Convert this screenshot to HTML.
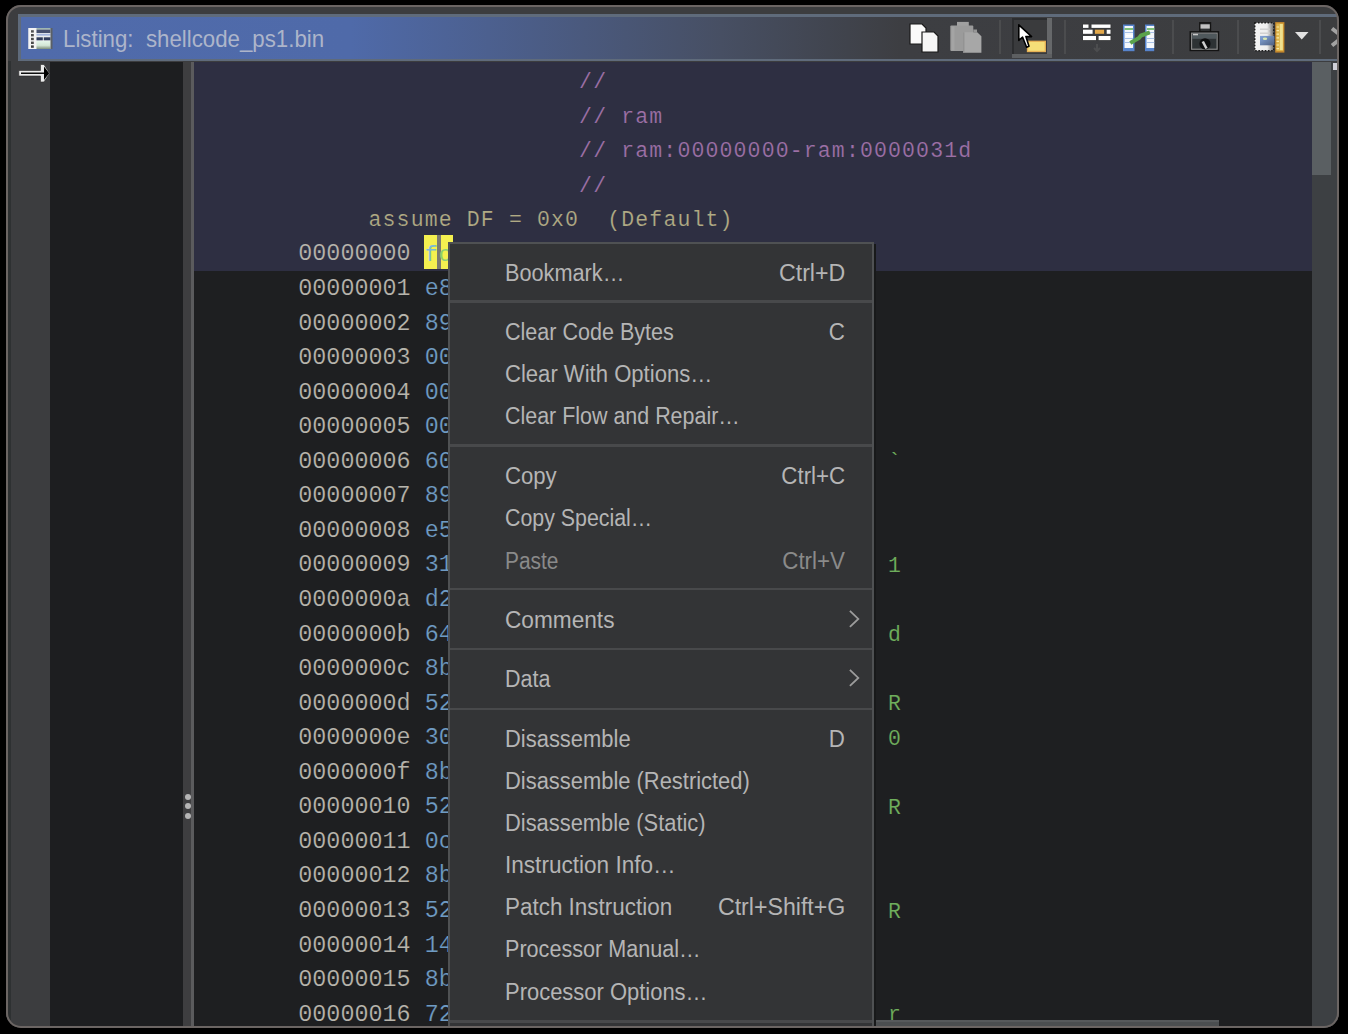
<!DOCTYPE html>
<html><head><meta charset="utf-8">
<style>
html,body{margin:0;padding:0;background:#000;width:1348px;height:1034px;overflow:hidden;position:relative}
#clip{position:absolute;left:6px;top:5px;width:1333px;height:1023px;border-radius:15px;background:#3c3d3f;overflow:hidden}
#inner{position:absolute;left:-6px;top:-5px;width:1348px;height:1034px}
#winborder{position:absolute;left:6px;top:5px;width:1333px;height:1023px;box-sizing:border-box;border:2px solid #6b6563;border-radius:15px}
#edgeL{position:absolute;left:8px;top:61px;width:3px;height:966px;background:#2e3132}
#title{position:absolute;left:18px;top:14px;width:1320px;height:47px;background:#5f6b7b}
#titlein{position:absolute;left:21px;top:17px;width:1317px;height:41.5px;background:linear-gradient(90deg,#506bab 0px,#4f6aa9 330px,#474f63 700px,#3d3e42 880px,#3c3d3f 100%)}
#titletxt{position:absolute;left:63px;top:24.6px;font-family:"Liberation Sans",sans-serif;font-size:23.2px;line-height:28px;color:#adb5ca;white-space:pre;display:inline-block;transform:scaleX(0.96);transform-origin:0 0}
#dark1{position:absolute;left:50px;top:61.5px;width:133px;height:966px;background:#1d1e20}
#div1{position:absolute;left:183px;top:61.5px;width:8.3px;height:966px;background:#3e3e40}
#div2{position:absolute;left:191.3px;top:61.5px;width:2.7px;height:966px;background:#5b5b5d}
#listing{position:absolute;left:194px;top:61.5px;width:1118px;height:966px;background:#1e1f21;overflow:hidden}
#navy{position:absolute;left:194px;top:61.5px;width:1118px;height:209.6px;background:#2e2f42}
#vscroll{position:absolute;left:1312px;top:61.5px;width:26px;height:966px;background:#3d4043}
#vthumb{position:absolute;left:1312px;top:62px;width:19px;height:113px;background:#5a5f62}
#vsq{position:absolute;left:1333px;top:63px;width:4px;height:7px;background:#d0d0d8}
#hthumb{position:absolute;left:448px;top:1020.3px;width:771px;height:6px;background:#4b4e50}
#hthumbtop{position:absolute;left:864px;top:1020.3px;width:355px;height:2px;background:#56595b}
.dot{position:absolute;width:6px;height:6px;border-radius:50%;background:#b5b5b5;left:185.4px}
.ln{position:absolute;font-family:"Liberation Mono",monospace;font-size:23.4px;line-height:34px;height:34px;white-space:pre;color:#b9b6ae}
.ln.sm{font-size:21.5px;letter-spacing:1.14px}
.ln{-webkit-text-stroke:0.2px #1e1f21}
.ln.nv{-webkit-text-stroke:0.2px #2e2f42}
.ln.nv2{-webkit-text-stroke:0}
.ln.sm.nv{-webkit-text-stroke:0.15px #2e2f42}
.ln.sm.gr{-webkit-text-stroke:0.15px #1e1f21}
.cm{color:#9d70a6}
.as{color:#b0aa84}
.ad{color:#b8b5ad}
.hx{color:#6f9bc4}
.gr{color:#6fae5c}
#cur1{position:absolute;left:424.2px;top:234.5px;width:13px;height:34.2px;background:#f4f050}
#cur2{position:absolute;left:437.2px;top:234.5px;width:3.6px;height:34.2px;background:#7a7a70}
#cur3{position:absolute;left:440.8px;top:234.5px;width:12px;height:34.2px;background:#f4f050}
#menu{position:absolute;left:447.5px;top:242px;width:426.5px;height:800px;background:#333436;box-sizing:border-box;border:2.6px solid #4f5153}
.mi{position:absolute;left:0;width:100%;height:30px;font-family:"Liberation Sans",sans-serif;font-size:23.5px;line-height:30px;color:#b5b5b5;white-space:pre}
.mi .lab{position:absolute;left:55px;top:0;display:inline-block;transform:scaleX(0.915);transform-origin:0 50%}
.mi .acc{position:absolute;right:27px;top:0;display:inline-block;transform:scaleX(0.95);transform-origin:100% 50%}
.mi.dis{color:#8a8a8a}
.mi .arr{position:absolute}
.sep{position:absolute;left:0;width:100%;height:2.6px;background:#48494b}
.tsep{position:absolute;top:20px;width:1.5px;height:34px;background:#4b4c4e}
svg{position:absolute;overflow:visible}
</style></head><body>
<div id="clip"><div id="inner">
<div id="edgeL"></div>
<div id="title"></div>
<div id="titlein"></div>
<div id="titletxt">Listing:  shellcode_ps1.bin</div>
<!-- title icon -->
<svg style="left:28px;top:27.8px" width="25" height="22" viewBox="0 0 25 22">
 <defs><linearGradient id="tg" x1="0" x2="0" y1="0" y2="1"><stop offset="0" stop-color="#e4f6ea"/><stop offset="0.55" stop-color="#d3e6d6"/><stop offset="1" stop-color="#7f8f7c"/></linearGradient></defs>
 <rect x="0.5" y="0" width="23.5" height="21" fill="#e9ecec"/>
 <rect x="0.5" y="0" width="8" height="21" fill="#f3f3f3"/>
 <rect x="3" y="2.2" width="2.8" height="2.4" fill="#505050"/>
 <rect x="3" y="6" width="2.8" height="2.4" fill="#4a4a4a"/>
 <rect x="3" y="9.8" width="2.8" height="2.4" fill="#4a4a4a"/>
 <rect x="3" y="13.6" width="2.8" height="2.4" fill="#4a4a4a"/>
 <rect x="3" y="17.4" width="2.8" height="2.4" fill="#3e3e3e"/>
 <rect x="8.5" y="0" width="15" height="1.6" fill="#9fb6b0"/>
 <rect x="8.5" y="1.6" width="14" height="3.4" fill="#46506e"/>
 <rect x="8.5" y="5.8" width="14" height="1.8" fill="#a3b4dc"/>
 <rect x="8.5" y="9.3" width="6.3" height="3" fill="#2f3b5a"/>
 <rect x="15.8" y="9.3" width="6.7" height="3" fill="#2f3b5a"/>
 <rect x="8.5" y="13" width="14" height="8" fill="url(#tg)"/>
 <rect x="22.5" y="0" width="2" height="21" fill="#5b6066"/>
</svg>
<!-- toolbar -->
<svg style="left:909px;top:23px" width="30" height="30" viewBox="0 0 30 30">
 <path d="M1 1 H13 L17 5 V21 H1 Z" fill="#fafafa" stroke="#1a1a1a" stroke-width="1.2"/>
 <path d="M13 9 H25 L29 13 V29 H13 Z" fill="#f6f6f6" stroke="#1a1a1a" stroke-width="1.2"/>
</svg>
<svg style="left:950px;top:21px" width="33" height="33" viewBox="0 0 33 33">
 <rect x="7" y="0.9" width="11.8" height="5" fill="#a0a0a0"/>
 <rect x="0.3" y="4.4" width="23" height="25.6" rx="1" fill="#9b9b9b"/>
 <rect x="1.5" y="5.5" width="3" height="24" fill="#a4a4a4"/>
 <path d="M23.3 8.6 H27 V11.3 H23.3 Z" fill="#969696"/>
 <path d="M13.2 11.3 H27.2 L31.4 15.3 V31.8 H13.2 Z" fill="#a7a7a7"/>
 <rect x="13.2" y="11.3" width="1.2" height="20.5" fill="#8f8f8f"/>
</svg>
<div class="tsep" style="left:999px"></div>
<div style="position:absolute;left:1012px;top:18px;width:40px;height:40px;background:#3a3b3d;box-shadow:inset 2px 2px 0 #2c2d2f"></div>
<div style="position:absolute;left:1047px;top:18px;width:5px;height:40px;background:#66686a"></div>
<div style="position:absolute;left:1012px;top:54px;width:40px;height:4px;background:#5d5f61"></div>
<svg style="left:1017px;top:24px" width="30" height="30" viewBox="0 0 30 30">
 <rect x="10.5" y="17.3" width="17.8" height="10.2" fill="#f5df78" stroke="#e8b255" stroke-width="1.3"/>
 <path d="M1.8 0.9 V16.4 L5.6 13.2 L9.6 23.2 L12 22.3 L8.9 12.6 H14.6 Z" fill="#ffffff" stroke="#000" stroke-width="1.6" stroke-linejoin="round"/>
</svg>
<div class="tsep" style="left:1064px"></div>
<svg style="left:1083px;top:24px" width="28" height="30" viewBox="0 0 28 30">
 <rect x="-1" y="-1" width="30" height="18" fill="#3a3b3d"/>
 <rect x="0" y="0.5" width="5.5" height="3.4" fill="#fff"/>
 <rect x="8.5" y="0.5" width="19" height="3.4" fill="#fff"/>
 <rect x="0" y="5.7" width="9.6" height="4.1" fill="#fff"/>
 <rect x="11.9" y="5.7" width="9.2" height="4.1" fill="#e3a84a"/>
 <rect x="23.7" y="5.7" width="3.8" height="4.1" fill="#fff"/>
 <rect x="0" y="12" width="13" height="4.1" fill="#fff"/>
 <rect x="15.6" y="12" width="11.9" height="4.1" fill="#fff"/>
 <path d="M14 20 V27 M11 24 L14 27 L17 24" stroke="#4c4d4f" stroke-width="2" fill="none"/>
</svg>
<svg style="left:1123px;top:24px" width="32" height="28" viewBox="0 0 32 28">
 <rect x="0" y="0.5" width="11.5" height="26.7" fill="#5784cc"/>
 <rect x="1.5" y="2" width="8.5" height="22" fill="#f4f7fb"/>
 <rect x="1.5" y="4" width="8.5" height="2" fill="#7fc07a"/>
 <rect x="1.5" y="8" width="8.5" height="1" fill="#a7c0e6"/>
 <rect x="3" y="11" width="7" height="1.5" fill="#ffffff"/>
 <rect x="1.5" y="14" width="8.5" height="1" fill="#a7c0e6"/>
 <rect x="1.5" y="18" width="8.5" height="1" fill="#a7c0e6"/>
 <rect x="22" y="0.5" width="9.2" height="26.7" fill="#5784cc"/>
 <rect x="23.5" y="2" width="7.7" height="22" fill="#f4f7fb"/>
 <rect x="24" y="4" width="7.2" height="2" fill="#7fc07a"/>
 <rect x="23.5" y="8" width="7.7" height="1" fill="#a7c0e6"/>
 <rect x="23.5" y="14" width="7.7" height="1" fill="#a7c0e6"/>
 <rect x="23.5" y="18" width="7.7" height="1" fill="#a7c0e6"/>
 <path d="M9 18 L16 14 L18 11.5 L25 9" stroke="#5aa24c" stroke-width="4" fill="none" stroke-linecap="square"/>
</svg>
<div class="tsep" style="left:1172px"></div>
<svg style="left:1189px;top:22px" width="31" height="30" viewBox="0 0 31 30">
 <rect x="10.8" y="0.8" width="10.7" height="10" fill="#2e3133" stroke="#141414" stroke-width="1.4"/>
 <rect x="11.5" y="2.3" width="9.3" height="4.3" fill="#c2c2c2"/>
 <rect x="1.2" y="9.8" width="28.3" height="18.7" fill="#2d3234" stroke="#141414" stroke-width="1.4"/>
 <rect x="2.6" y="11.2" width="25.5" height="16" fill="none" stroke="#8c8c8c" stroke-width="1.1"/>
 <rect x="3.2" y="11.8" width="24.3" height="5" fill="#586266" opacity="0.8"/>
 <rect x="4" y="11.8" width="5" height="1.5" fill="#c8c8c8"/>
 <circle cx="16" cy="21.8" r="5.6" fill="#0d0e0f"/>
 <path d="M13.8 19.5 L17.5 26.5" stroke="#cfcfcf" stroke-width="2.6"/>
</svg>
<div class="tsep" style="left:1237px"></div>
<svg style="left:1254px;top:22px" width="31" height="31" viewBox="0 0 31 31">
 <defs>
  <linearGradient id="pg" x1="0" x2="1" y1="0" y2="0"><stop offset="0" stop-color="#f4f4f4"/><stop offset="0.65" stop-color="#eeeeee"/><stop offset="1" stop-color="#6a6a6a"/></linearGradient>
  <linearGradient id="bl" x1="0" x2="1" y1="0" y2="1"><stop offset="0" stop-color="#86a8dc"/><stop offset="1" stop-color="#4e5f80"/></linearGradient>
 </defs>
 <rect x="0.75" y="0.75" width="19" height="28" fill="url(#pg)" stroke="#1e1e1e" stroke-width="1.5" stroke-dasharray="1.6 1.6"/>
 <rect x="6" y="6.5" width="10" height="1.4" fill="#cfcfcf"/>
 <rect x="6" y="10.5" width="10" height="1.4" fill="#cfcfcf"/>
 <rect x="6" y="13.9" width="14.4" height="9.4" fill="url(#bl)"/>
 <ellipse cx="11" cy="16.8" rx="2.2" ry="1.2" fill="#d9e8b2"/>
 <rect x="21.2" y="0.1" width="9.2" height="30.5" fill="#c7892c"/>
 <rect x="22.4" y="1.5" width="6.8" height="27.5" fill="#dcb54c"/>
 <rect x="25.8" y="2" width="3" height="26" fill="#efe08e"/>
 <path d="M22.5 5 h2.5 M22.5 8.6 h2.5 M22.5 12.2 h2.5 M22.5 15.8 h2.5 M22.5 19.4 h2.5 M22.5 23 h2.5 M22.5 26.6 h2.5" stroke="#f6e7a6" stroke-width="1.2"/>
</svg>
<svg style="left:1294.5px;top:32px" width="14" height="8" viewBox="0 0 14 8"><path d="M0 0 H13.5 L6.75 7.5 Z" fill="#e2e2e2"/></svg>
<div class="tsep" style="left:1319px"></div>
<svg style="left:1330px;top:27px" width="16" height="20" viewBox="0 0 16 20"><path d="M2 1.5 L13 10 L2 18.5" stroke="#a2a2a2" stroke-width="4" fill="none"/></svg>

<div id="dark1"></div>
<div id="div1"></div>
<div id="div2"></div>
<div class="dot" style="top:793.7px"></div>
<div class="dot" style="top:803.3px"></div>
<div class="dot" style="top:812.9px"></div>
<svg style="left:18px;top:64px" width="33" height="19" viewBox="0 0 33 19">
 <path d="M0.8 6.5 H22.5 V0.5 H26 L31.6 9.2 L26 18 H22.5 V12 H0.8 Z" fill="#ececec" stroke="#2a2a2a" stroke-width="0.6"/>
 <path d="M3 8.6 H26 V9.9 H3 Z" fill="#0e0e0e"/>
 <path d="M26 2.5 L31.2 9.2 L26 16 Z" fill="#000"/>
</svg>
<div id="listing"></div>
<div id="navy"></div>
<div id="vscroll"></div>
<div id="vthumb"></div>
<div id="vsq"></div>
<div id="cur1"></div><div id="cur2"></div><div id="cur3"></div>
<div class="ln sm nv cm" style="top:65.14px;left:579.10px">//</div>
<div class="ln sm nv cm" style="top:99.70px;left:579.10px">// ram</div>
<div class="ln sm nv cm" style="top:134.26px;left:579.10px">// ram:00000000-ram:0000031d</div>
<div class="ln sm nv cm" style="top:168.82px;left:579.10px">//</div>
<div class="ln sm nv as" style="top:203.38px;left:368.50px">assume DF = 0x0  (Default)</div>
<div class="ln ad nv" style="top:237.39px;left:298.30px">00000000</div>
<div class="ln sm nv2" style="top:237.94px;left:424.66px"><span style="color:#7ab9d6">f</span><span style="color:#8fce70">c</span></div>
<div class="ln ad" style="top:271.95px;left:298.30px">00000001 <span class="hx">e8</span></div>
<div class="ln ad" style="top:306.51px;left:298.30px">00000002 <span class="hx">89</span></div>
<div class="ln ad" style="top:341.07px;left:298.30px">00000003 <span class="hx">00</span></div>
<div class="ln ad" style="top:375.63px;left:298.30px">00000004 <span class="hx">00</span></div>
<div class="ln ad" style="top:410.19px;left:298.30px">00000005 <span class="hx">00</span></div>
<div class="ln ad" style="top:444.75px;left:298.30px">00000006 <span class="hx">60</span></div>
<div class="ln sm gr" style="top:445.30px;left:887.98px">`</div>
<div class="ln ad" style="top:479.31px;left:298.30px">00000007 <span class="hx">89</span></div>
<div class="ln ad" style="top:513.87px;left:298.30px">00000008 <span class="hx">e5</span></div>
<div class="ln ad" style="top:548.43px;left:298.30px">00000009 <span class="hx">31</span></div>
<div class="ln sm gr" style="top:548.98px;left:887.98px">1</div>
<div class="ln ad" style="top:582.99px;left:298.30px">0000000a <span class="hx">d2</span></div>
<div class="ln ad" style="top:617.55px;left:298.30px">0000000b <span class="hx">64</span></div>
<div class="ln sm gr" style="top:618.10px;left:887.98px">d</div>
<div class="ln ad" style="top:652.11px;left:298.30px">0000000c <span class="hx">8b</span></div>
<div class="ln ad" style="top:686.67px;left:298.30px">0000000d <span class="hx">52</span></div>
<div class="ln sm gr" style="top:687.22px;left:887.98px">R</div>
<div class="ln ad" style="top:721.23px;left:298.30px">0000000e <span class="hx">30</span></div>
<div class="ln sm gr" style="top:721.78px;left:887.98px">0</div>
<div class="ln ad" style="top:755.79px;left:298.30px">0000000f <span class="hx">8b</span></div>
<div class="ln ad" style="top:790.35px;left:298.30px">00000010 <span class="hx">52</span></div>
<div class="ln sm gr" style="top:790.90px;left:887.98px">R</div>
<div class="ln ad" style="top:824.91px;left:298.30px">00000011 <span class="hx">0c</span></div>
<div class="ln ad" style="top:859.47px;left:298.30px">00000012 <span class="hx">8b</span></div>
<div class="ln ad" style="top:894.03px;left:298.30px">00000013 <span class="hx">52</span></div>
<div class="ln sm gr" style="top:894.58px;left:887.98px">R</div>
<div class="ln ad" style="top:928.59px;left:298.30px">00000014 <span class="hx">14</span></div>
<div class="ln ad" style="top:963.15px;left:298.30px">00000015 <span class="hx">8b</span></div>
<div class="ln ad" style="top:997.71px;left:298.30px">00000016 <span class="hx">72</span></div>
<div class="ln sm gr" style="top:998.26px;left:887.98px">r</div>
<div id="hthumb"></div>
<div id="hthumbtop"></div>
<div style="position:absolute;left:874px;top:244px;width:2px;height:790px;background:#18191a"></div>
<div id="menu">
<div class="mi" style="top:13.50px"><span class="lab" style="transform:scaleX(0.9229)">Bookmark…</span>
<span class="acc" style="transform:scaleX(0.985)">Ctrl+D</span>
</div>
<div class="sep" style="top:56.20px"></div>
<div class="mi" style="top:73.00px"><span class="lab" style="transform:scaleX(0.9166)">Clear Code Bytes</span>
<span class="acc">C</span>
</div>
<div class="mi" style="top:115.00px"><span class="lab" style="transform:scaleX(0.9392)">Clear With Options…</span>
</div>
<div class="mi" style="top:157.20px"><span class="lab" style="transform:scaleX(0.9123)">Clear Flow and Repair…</span>
</div>
<div class="sep" style="top:200.20px"></div>
<div class="mi" style="top:216.90px"><span class="lab" style="transform:scaleX(0.9419)">Copy</span>
<span class="acc">Ctrl+C</span>
</div>
<div class="mi" style="top:259.00px"><span class="lab" style="transform:scaleX(0.9087)">Copy Special…</span>
</div>
<div class="mi dis" style="top:301.60px"><span class="lab" style="transform:scaleX(0.8896)">Paste</span>
<span class="acc">Ctrl+V</span>
</div>
<div class="sep" style="top:343.90px"></div>
<div class="mi" style="top:360.80px"><span class="lab" style="transform:scaleX(0.9634)">Comments</span>
<svg class="arr" style="left:399.00px;top:4.80px" width="12" height="18" viewBox="0 0 12 18"><path d="M0.9 0.9 L9.3 8.9 L0.9 16.9" fill="none" stroke="#9c9c9c" stroke-width="1.8"/></svg>
</div>
<div class="sep" style="top:403.70px"></div>
<div class="mi" style="top:420.00px"><span class="lab" style="transform:scaleX(0.915)">Data</span>
<svg class="arr" style="left:399.00px;top:4.80px" width="12" height="18" viewBox="0 0 12 18"><path d="M0.9 0.9 L9.3 8.9 L0.9 16.9" fill="none" stroke="#9c9c9c" stroke-width="1.8"/></svg>
</div>
<div class="sep" style="top:463.50px"></div>
<div class="mi" style="top:479.70px"><span class="lab" style="transform:scaleX(0.9336)">Disassemble</span>
<span class="acc">D</span>
</div>
<div class="mi" style="top:522.20px"><span class="lab" style="transform:scaleX(0.9326)">Disassemble (Restricted)</span>
</div>
<div class="mi" style="top:564.00px"><span class="lab" style="transform:scaleX(0.9309)">Disassemble (Static)</span>
</div>
<div class="mi" style="top:606.00px"><span class="lab" style="transform:scaleX(0.9607)">Instruction Info…</span>
</div>
<div class="mi" style="top:647.80px"><span class="lab" style="transform:scaleX(0.955)">Patch Instruction</span>
<span class="acc" style="transform:scaleX(0.985)">Ctrl+Shift+G</span>
</div>
<div class="mi" style="top:689.70px"><span class="lab" style="transform:scaleX(0.9193)">Processor Manual…</span>
</div>
<div class="mi" style="top:732.50px"><span class="lab" style="transform:scaleX(0.9341)">Processor Options…</span>
</div>
<div class="sep" style="top:776.20px"></div>
</div>
</div></div>
<div id="winborder"></div>
</body></html>
